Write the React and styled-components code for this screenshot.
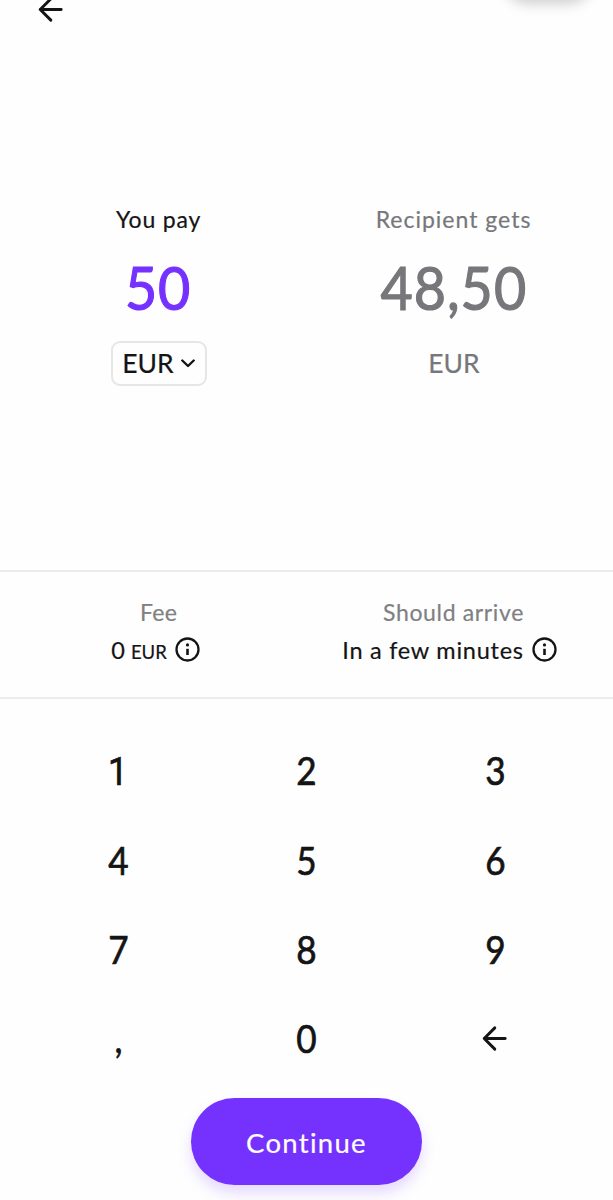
import React from 'react'
import styled, { createGlobalStyle } from 'styled-components';

const GlobalStyle = createGlobalStyle`
    * {
        box-sizing: border-box;
    }
    body {
        margin: 0;
        background: #fefefe;
        font-family: Lato, "Liberation Sans", sans-serif;
        color: #141415;
    }
    button {
        font: inherit;
        color: inherit;
        background: none;
        border: 0;
        padding: 0;
    }
`

const Screen = styled.div`
    display: flex;
    flex-direction: column;
    width: 613px;
    height: 1200px;
    overflow: hidden;
`

/* the header is scrolled almost completely out of view */
const Header = styled.header`
    display: flex;
    flex: none;
    justify-content: space-between;
    align-items: flex-end;
    height: 80px;
    margin-top: -57px;
    padding: 0 22px 0 37px;
`

const HeaderPill = styled.div`
    width: 86px;
    height: 44px;
    margin-bottom: 25px;
    border-radius: 22px;
    background: #fff;
    box-shadow: 0 6px 13px rgba(0, 0, 0, 0.19);
`

const Amounts = styled.section`
    display: grid;
    grid-template-columns: 1fr 1fr;
    flex: none;
    height: 547px;
    padding: 181px 12px 0 11px;
`

const Column = styled.div`
    display: flex;
    flex-direction: column;
    align-items: center;
    color: ${p => p.$muted ? '#77777b' : '#141415'};
`

const Label = styled.div`
    height: 30px;
    line-height: 30px;
    font-size: 23px;
    letter-spacing: ${p => p.$spacing || 0}px;
    white-space: nowrap;
    color: ${p => p.$muted ? '#808083' : 'inherit'};
    -webkit-text-stroke: 0.2px currentColor;
`

const Amount = styled.div`
    height: 72px;
    margin-top: 17px;
    line-height: 72px;
    font-size: 60.5px;
    letter-spacing: ${p => p.$spacing || 0}px;
    color: ${p => p.$active ? '#7532ff' : 'inherit'};
    transform: scaleX(0.92);
    -webkit-text-stroke: 1.2px currentColor;
`

const Currency = styled.div`
    display: flex;
    align-items: center;
    justify-content: center;
    gap: 7px;
    width: 96px;
    height: 45px;
    margin-top: 18px;
    padding: 0 0 1px 1px;
    font-size: 26.5px;
    border: 2px solid ${p => p.$boxed ? '#e6e6e6' : 'transparent'};
    border-radius: 9px;
    -webkit-text-stroke: 0.2px currentColor;
`

const Details = styled.section`
    display: grid;
    grid-template-columns: 1fr 1fr;
    flex: none;
    height: 129px;
    padding: 25px 12px 0 11px;
    border-top: 2px solid #ebebeb;
    border-bottom: 2px solid #ebebeb;
`

const Value = styled.div`
    display: flex;
    align-items: center;
    gap: 8px;
    height: 30px;
    margin-top: 8px;
    margin-right: ${p => p.$shift || 0}px;
    font-size: 23.5px;
    letter-spacing: ${p => p.$spacing || 0}px;
    white-space: nowrap;
    -webkit-text-stroke: 0.2px currentColor;
    small {
        font-size: 18.5px;
    }
    svg {
        margin-top: -1px;
    }
`

const Keypad = styled.section`
    display: grid;
    grid-template-columns: repeat(3, 1fr);
    grid-auto-rows: 89.4px;
    flex: none;
    padding: 27px 24px 0;
`

const Key = styled.button`
    display: flex;
    align-items: center;
    justify-content: center;
    font-size: 39px;
    -webkit-text-stroke: 0.7px currentColor;
`

const Digit = styled.span`
    transform: scaleX(0.9);
    margin-bottom: 1px;
    /* Roboto draws its 1 without a foot */
    ${p => p.$footless && 'font-family: Roboto, sans-serif; margin: 2px 0 0;'}
`

const Footer = styled.footer`
    display: flex;
    justify-content: center;
    margin-top: 14px;
`

const ContinueButton = styled.button`
    width: 231px;
    height: 87px;
    padding-top: 2px;
    border-radius: 44px;
    background: #7532ff;
    color: #fff;
    font-size: 27.5px;
    letter-spacing: 1.3px;
    box-shadow: 0 8px 14px rgba(117, 50, 255, 0.18);
    -webkit-text-stroke: 0.2px currentColor;
`

function BackArrow() {
  return (
    <svg width="27" height="27" viewBox="0 0 27 27" fill="none" stroke="#141415" strokeWidth="2.9" strokeLinecap="round" strokeLinejoin="round">
        <path d="M3.2 13.5H24.2M13.8 2.9L3.2 13.5L13.8 24.1" />
    </svg>
  )
}

function InfoIcon() {
  return (
    <svg width="25" height="25" viewBox="0 0 25 25" fill="none" stroke="#141415" strokeWidth="2.3">
        <circle cx="12.5" cy="12.5" r="11" />
        <path d="M12.5 11.8V18" strokeWidth="2.6" />
        <circle cx="12.5" cy="7.9" r="1.6" fill="#141415" stroke="none" />
    </svg>
  )
}

function ChevronDown() {
  return (
    <svg width="15" height="10" viewBox="0 0 15 10" fill="none" stroke="#141415" strokeWidth="2.4" strokeLinecap="round" strokeLinejoin="round">
        <path d="M1.3 2.5L7 8L12.7 2.5" />
    </svg>
  )
}

const keys = ['1', '2', '3', '4', '5', '6', '7', '8', '9', ',', '0', 'back'];

function App() {
  return (
    <Screen>
        <GlobalStyle />
        <Header>
            <BackArrow />
            <HeaderPill />
        </Header>
        <Amounts>
            <Column>
                <Label $spacing={0.8}>You pay</Label>
                <Amount $active $spacing={1}>50</Amount>
                <Currency as="button" $boxed>EUR<ChevronDown /></Currency>
            </Column>
            <Column $muted>
                <Label $spacing={1}>Recipient gets</Label>
                <Amount $spacing={1.1}>48,50</Amount>
                <Currency>EUR</Currency>
            </Column>
        </Amounts>
        <Details>
            <Column>
                <Label $muted $spacing={0.3}>Fee</Label>
                <Value $shift={6}><span>0 <small>EUR</small></span><InfoIcon /></Value>
            </Column>
            <Column>
                <Label $muted $spacing={0.65}>Should arrive</Label>
                <Value $shift={8} $spacing={0.75}>In a few minutes<InfoIcon /></Value>
            </Column>
        </Details>
        <Keypad>
            {keys.map(key => (
                <Key key={key}>
                    {key === 'back' ? <BackArrow /> : <Digit $footless={key === '1'}>{key}</Digit>}
                </Key>
            ))}
        </Keypad>
        <Footer>
            <ContinueButton>Continue</ContinueButton>
        </Footer>
    </Screen>
  )
}

export default App;
